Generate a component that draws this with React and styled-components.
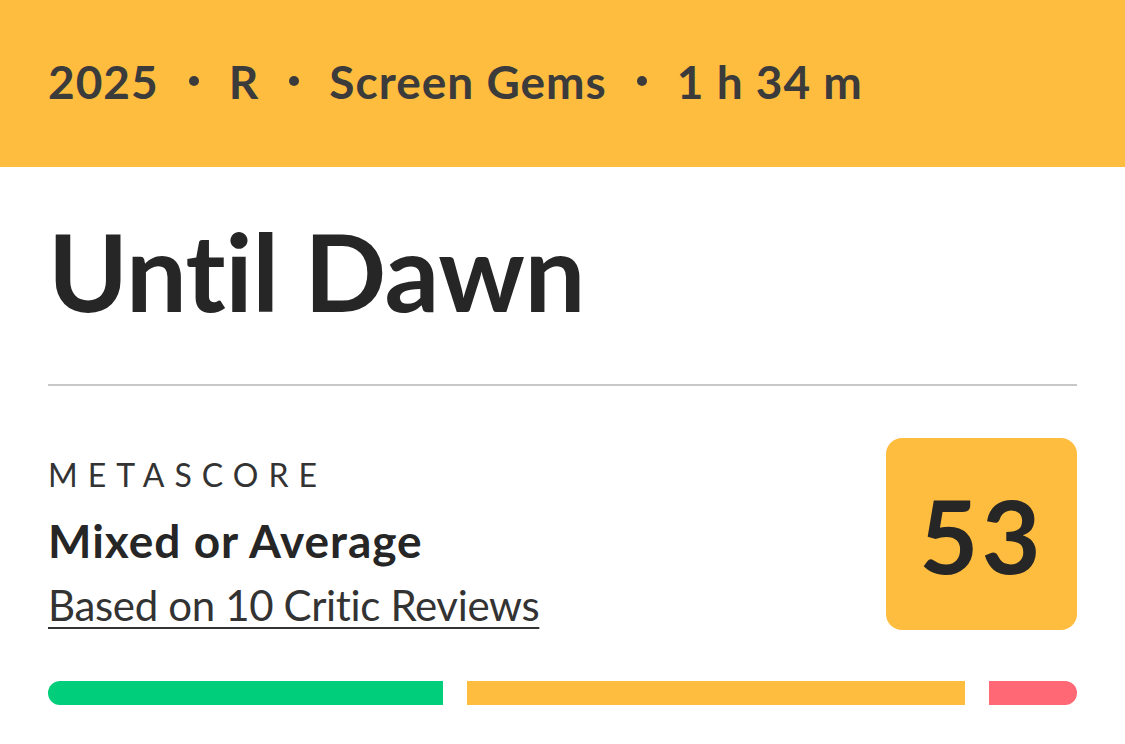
import React from "react";
import styled, { createGlobalStyle } from "styled-components";

const GlobalStyle = createGlobalStyle`
  html, body {
    margin: 0;
    padding: 0;
    background: #ffffff;
    font-family: Lato, "Open Sans", sans-serif;
  }
`;

const Page = styled.div`
  width: 1125px;
  height: 744px;
  overflow: hidden;
  background: #ffffff;
`;

const InfoBar = styled.div`
  height: 167px;
  background: #ffbd3f;
  display: flex;
  align-items: center;
  padding: 0 48px 5px;
  box-sizing: border-box;
  gap: 30px;
  font-size: 46px;
  font-weight: 700;
  letter-spacing: 1px;
  color: #3b3b3b;
`;

const Dot = styled.span`
  width: 10px;
  height: 10px;
  border-radius: 50%;
  background: #3b3b3b;
`;

const Body = styled.div`
  padding: 0 48px;
`;

const Title = styled.h1`
  margin: 0;
  padding: 49px 0 0;
  font-size: 108px;
  line-height: 1;
  font-weight: 700;
  color: #262626;
  letter-spacing: -0.5px;
`;

const Divider = styled.hr`
  margin: 60px 0 0;
  border: none;
  height: 2px;
  background: #c8c8c8;
`;

const ScoreRow = styled.div`
  display: flex;
  justify-content: space-between;
  align-items: flex-start;
  margin-top: 52px;
`;

const ScoreText = styled.div`
  display: flex;
  flex-direction: column;
`;

const Label = styled.div`
  margin-top: 21px;
  font-size: 32px;
  line-height: 1;
  letter-spacing: 10px;
  color: #333333;
`;

const Verdict = styled.div`
  margin-top: 27px;
  font-size: 46px;
  line-height: 1;
  font-weight: 700;
  letter-spacing: 1px;
  color: #262626;
`;

const Reviews = styled.a`
  margin-top: 18px;
  font-size: 42px;
  line-height: 1.1;
  letter-spacing: -0.35px;
  color: #333333;
  text-decoration: underline;
  text-decoration-thickness: 2px;
  text-underline-offset: 6px;
`;

const ScoreBox = styled.div`
  width: 191px;
  height: 192px;
  border-radius: 16px;
  background: #ffbd3f;
  display: flex;
  align-items: center;
  justify-content: center;
  font-size: 102px;
  font-weight: 700;
  letter-spacing: 3px;
  color: #262626;
`;

const Bars = styled.div`
  display: flex;
  gap: 24px;
  margin-top: 51px;
`;

const Bar = styled.div`
  height: 24px;
  background: ${(p) => p.color};
  &:first-child {
    border-radius: 12px 0 0 12px;
  }
  &:last-child {
    border-radius: 0 12px 12px 0;
  }
`;

const info = ["2025", "R", "Screen Gems", "1 h 34 m"];
const bars = [
  { color: "#00ce7a", width: 395 },
  { color: "#ffbd3f", width: 498 },
  { color: "#ff6874", width: 88 },
];

export default function App() {
  return (
    <Page>
      <GlobalStyle />
      <InfoBar>
        {info.map((item, i) => (
          <React.Fragment key={item}>
            {i > 0 && <Dot />}
            <span>{item}</span>
          </React.Fragment>
        ))}
      </InfoBar>
      <Body>
        <Title>Until Dawn</Title>
        <Divider />
        <ScoreRow>
          <ScoreText>
            <Label>METASCORE</Label>
            <Verdict>Mixed or Average</Verdict>
            <Reviews>Based on 10 Critic Reviews</Reviews>
          </ScoreText>
          <ScoreBox>53</ScoreBox>
        </ScoreRow>
        <Bars>
          {bars.map((b) => (
            <Bar key={b.color} color={b.color} style={{ width: b.width }} />
          ))}
        </Bars>
      </Body>
    </Page>
  );
}
